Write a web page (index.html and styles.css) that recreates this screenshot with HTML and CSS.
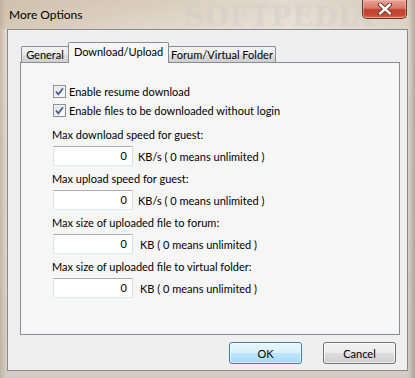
FILE: index.html
```html
<!DOCTYPE html>
<html>
<head>
<meta charset="utf-8">
<link rel="stylesheet" href="styles.css">
</head>
<body>
<div class="window">
  <div class="titlebar">
    <span class="title">More Options</span>
    <span class="watermark">SOFTPEDIA</span>
    <div class="close">
      <svg width="16" height="12" viewBox="0 0 16 12">
        <path d="M3 1.5 L13 10.5 M13 1.5 L3 10.5" stroke="#5a2a24" stroke-width="4.2" stroke-linecap="round"/>
        <path d="M3 1.5 L13 10.5 M13 1.5 L3 10.5" stroke="#ffffff" stroke-width="2.4" stroke-linecap="round"/>
      </svg>
    </div>
  </div>
  <div class="client">
    <div class="tabctl">
      <div class="tabstrip">
        <div class="tab t-general">General</div>
        <div class="tab t-dl active">Download/Upload</div>
        <div class="tab t-forum">Forum/Virtual Folder</div>
      </div>
      <div class="panel">
        <label class="check">
          <span class="box"><svg width="9" height="9" viewBox="0 0 9 9"><path d="M1 4.6 L3.4 7.4 L8 1.2" fill="none" stroke="#4a5d96" stroke-width="1.8"/></svg></span>
          Enable resume download
        </label>
        <label class="check">
          <span class="box"><svg width="9" height="9" viewBox="0 0 9 9"><path d="M1 4.6 L3.4 7.4 L8 1.2" fill="none" stroke="#4a5d96" stroke-width="1.8"/></svg></span>
          Enable files to be downloaded without login
        </label>

        <div class="field first">
          <div class="label">Max download speed for guest:</div>
          <div class="row"><span class="edit">0</span><span class="unit">KB/s ( 0 means unlimited )</span></div>
        </div>
        <div class="field">
          <div class="label">Max upload speed for guest:</div>
          <div class="row"><span class="edit">0</span><span class="unit">KB/s ( 0 means unlimited )</span></div>
        </div>
        <div class="field">
          <div class="label">Max size of uploaded file to forum:</div>
          <div class="row"><span class="edit">0</span><span class="unit kb">KB ( 0 means unlimited )</span></div>
        </div>
        <div class="field">
          <div class="label">Max size of uploaded file to virtual folder:</div>
          <div class="row"><span class="edit">0</span><span class="unit kb">KB ( 0 means unlimited )</span></div>
        </div>
      </div>
    </div>
    <div class="buttons">
      <div class="btn default">OK</div>
      <div class="btn">Cancel</div>
    </div>
  </div>
</div>
</body>
</html>
```
FILE: styles.css
```css
* { box-sizing: border-box; }
html, body { margin: 0; padding: 0; }
body {
  width: 415px;
  height: 378px;
  overflow: hidden;
  font-family: Lato, "Noto Sans", sans-serif;
  font-size: 11px;
  color: #000;
}
.window {
  width: 415px;
  height: 378px;
  background:
    linear-gradient(90deg, rgba(150,130,105,0.35) 0px, rgba(200,185,165,0.0) 6px, rgba(0,0,0,0) 408px, rgba(120,110,100,0.45) 415px),
    linear-gradient(180deg, #d9cdbc 0px, #e2d9cd 30px, #ddd5ca 200px, #d4ccc2 378px);
  display: flex;
  flex-direction: column;
  position: relative;
}
.titlebar {
  height: 29px;
  display: flex;
  align-items: flex-start;
  position: relative;
  background: linear-gradient(90deg, rgba(190,170,145,0.35) 0%, rgba(255,255,255,0.0) 40%, rgba(255,255,255,0.25) 70%, rgba(200,190,180,0.2) 100%);
}
.title {
  font-family: Lato, "Noto Sans", sans-serif;
  font-size: 12px;
  margin: 7px 0 0 9px;
  color: #000;
}
.watermark {
  position: absolute;
  left: 185px;
  top: 1px;
  font-family: "DejaVu Serif", serif;
  font-weight: bold;
  font-size: 27px;
  letter-spacing: 1px;
  color: rgba(255,255,255,0.3);
  text-shadow: 0 0 1px rgba(150,140,130,0.3);
}
.close {
  margin-left: auto;
  margin-right: 8px;
  width: 45px;
  height: 19px;
  border: 1px solid #5e3a33;
  border-top: none;
  border-radius: 0 0 5px 5px;
  background: linear-gradient(180deg, #e6a496 0%, #d8796a 45%, #c2402d 55%, #c84a36 85%, #dd7a63 100%);
  box-shadow: inset 0 0 0 1px rgba(255,200,190,0.45);
  display: flex;
  align-items: center;
  justify-content: center;
  position: relative;
  z-index: 2;
}
.client {
  margin: 0 7px 0 7px;
  height: 342px;
  border: 1px solid #8a8a8a;
  background: #efefef;
  padding: 12px 8px 0 12px;
  display: flex;
  flex-direction: column;
}
.tabctl {
  display: flex;
  flex-direction: column;
}
.tabstrip {
  display: flex;
  align-items: flex-end;
  height: 20px;
  padding-left: 1px;
  position: relative;
  z-index: 1;
}
.tab {
  height: 16px;
  border: 1px solid #898c95;
  border-bottom: none;
  background: linear-gradient(180deg, #f3f3f3 0%, #ebebeb 50%, #dddddd 51%, #cfcfcf 100%);
  display: flex;
  align-items: center;
  justify-content: center;
  white-space: nowrap;
  border-radius: 2px 2px 0 0;
  line-height: 14px;
  padding-top: 1px;
}
.t-general { width: 48px; }
.t-dl { width: 101px; margin-left: -1px; }
.t-forum { width: 108px; margin-left: -1px; }
.tab.active {
  height: 21px;
  margin-bottom: -1px;
  background: #f6f6f6;
  align-items: flex-start;
  padding-top: 2px;
  position: relative;
  z-index: 2;
}
.panel {
  width: 380px;
  height: 273px;
  border: 1px solid #898c95;
  background: #f6f6f6;
  padding: 19px 0 0 32px;
  display: flex;
  flex-direction: column;
}
.check {
  height: 19px;
  display: flex;
  align-items: center;
  white-space: nowrap;
}
.box {
  width: 13px;
  height: 13px;
  border: 1px solid #8f8f8f;
  background: linear-gradient(135deg, #dcdcdc 0%, #f4f4f4 60%, #ffffff 100%);
  display: flex;
  align-items: center;
  justify-content: center;
  margin-right: 3px;
  box-shadow: inset 0 0 0 1px #f4f4f4;
}
.field {
  margin-top: 5px;
  display: flex;
  flex-direction: column;
}
.field.first { margin-top: 7px; }
.label {
  height: 16px;
  line-height: 16px;
  white-space: nowrap;
  margin-left: -1px;
}
.row {
  margin-top: 3px;
  display: flex;
  align-items: center;
  height: 20px;
}
.edit {
  width: 80px;
  height: 20px;
  border: 1px solid #abadb3;
  border-left-color: #e2e3ea;
  border-right-color: #dbdfe6;
  border-bottom-color: #e3e9ef;
  background: #fff;
  text-align: right;
  padding-right: 5px;
  line-height: 18px;
}
.unit {
  margin-left: 5px;
  white-space: nowrap;
}
.unit.kb { margin-left: 7px; }
.buttons {
  display: flex;
  justify-content: flex-end;
  margin-top: 7px;
  padding-right: 3px;
  gap: 21px;
}
.btn {
  width: 73px;
  height: 22px;
  border: 1px solid #707070;
  border-radius: 3px;
  background: linear-gradient(180deg, #f2f2f2 0%, #ebebeb 50%, #dddddd 51%, #cfcfcf 100%);
  box-shadow: inset 0 0 0 1px rgba(255,255,255,0.7);
  display: flex;
  align-items: center;
  justify-content: center;
}
.btn.default {
  border-color: #3c7fb1;
  background: linear-gradient(180deg, #eaf6fd 0%, #d9f0fc 50%, #bee6fd 51%, #a7d9f5 100%);
  box-shadow: inset 0 0 0 1px rgba(255,255,255,0.6);
}
```
